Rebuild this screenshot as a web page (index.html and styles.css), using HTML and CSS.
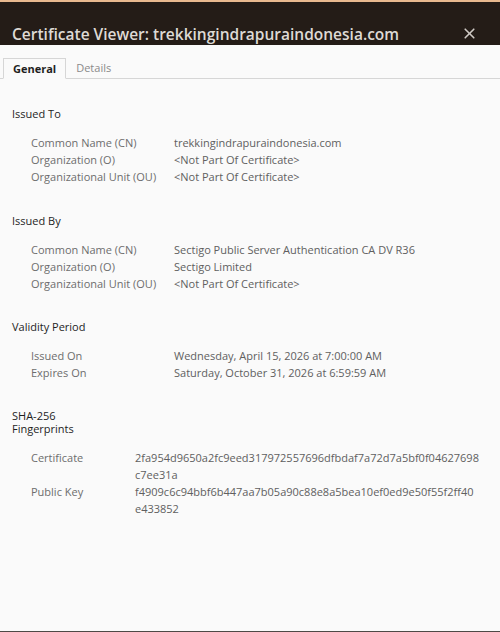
FILE: index.html
```html
<!DOCTYPE html>
<html>
<head>
<meta charset="utf-8">
<link rel="stylesheet" href="styles.css">
</head>
<body>
<div class="window">
  <div class="accent"></div>
  <header class="titlebar">
    <h1 class="title">Certificate Viewer: trekkingindrapuraindonesia.com</h1>
    <button class="close" aria-label="Close">
      <svg width="11" height="11" viewBox="0 0 11 11"><path d="M1.2 1.2 L9.8 9.8 M9.8 1.2 L1.2 9.8" stroke="#cfcac5" stroke-width="1.6" stroke-linecap="round"/></svg>
    </button>
  </header>
  <main class="content">
    <nav class="tabs">
      <span class="tab active">General</span>
      <span class="tab">Details</span>
    </nav>

    <section class="section issued-to">
      <h2 class="heading">Issued To</h2>
      <div class="rows">
        <span class="label">Common Name (CN)</span><span class="value">trekkingindrapuraindonesia.com</span>
        <span class="label">Organization (O)</span><span class="value">&lt;Not Part Of Certificate&gt;</span>
        <span class="label">Organizational Unit (OU)</span><span class="value">&lt;Not Part Of Certificate&gt;</span>
      </div>
    </section>

    <section class="section issued-by">
      <h2 class="heading">Issued By</h2>
      <div class="rows">
        <span class="label">Common Name (CN)</span><span class="value">Sectigo Public Server Authentication CA DV R36</span>
        <span class="label">Organization (O)</span><span class="value">Sectigo Limited</span>
        <span class="label">Organizational Unit (OU)</span><span class="value">&lt;Not Part Of Certificate&gt;</span>
      </div>
    </section>

    <section class="section validity">
      <h2 class="heading">Validity Period</h2>
      <div class="rows">
        <span class="label">Issued On</span><span class="value">Wednesday, April 15, 2026 at 7:00:00 AM</span>
        <span class="label">Expires On</span><span class="value">Saturday, October 31, 2026 at 6:59:59 AM</span>
      </div>
    </section>

    <section class="section fingerprints">
      <h2 class="heading narrow">SHA-256 Fingerprints</h2>
      <div class="rows fp">
        <span class="label">Certificate</span><span class="value hash">2fa954d9650a2fc9eed317972557696dfbdaf7a72d7a5bf0f04627698<wbr>c7ee31a</span>
        <span class="label">Public Key</span><span class="value hash">f4909c6c94bbf6b447aa7b05a90c88e8a5bea10ef0ed9e50f55f2ff40<wbr>e433852</span>
      </div>
    </section>
  </main>
</div>
</body>
</html>
```

FILE: styles.css
```css
* { box-sizing: border-box; margin: 0; padding: 0; }
html, body { width: 500px; height: 632px; overflow: hidden; }
body {
  font-family: "Open Sans", "Noto Sans", sans-serif;
  background: #fafafa;
}
.window {
  display: flex;
  flex-direction: column;
  height: 632px;
  border-bottom: 1px solid #4e4946;
}
.accent { height: 2px; background: #e9b98f; }
.titlebar {
  height: 43px;
  background: #241c17;
  display: flex;
  align-items: flex-end;
  justify-content: space-between;
  padding: 0 25px 0 12px;
}
.title {
  font-size: 15.5px;
  font-weight: 600;
  color: #dedad5;
  line-height: 22px;
}
.close {
  background: none;
  border: none;
  display: flex;
  margin-bottom: 6px;
}
.content {
  flex: 1;
  background: #fafafa;
  padding-top: 13px;
}
.tabs {
  display: flex;
  align-items: flex-end;
  padding-left: 3px;
  border-bottom: 1px solid #d6d6d6;
  height: 21px;
}
.tab {
  font-size: 11px;
  color: #8a8a8a;
  padding: 0 10px;
  line-height: 20px;
}
.tab.active {
  color: #1f1f1f;
  font-weight: 700;
  border: 1px solid #d6d6d6;
  border-bottom: 1px solid #fafafa;
  margin-bottom: -1px;
  height: 21px;
  padding: 0 9px;
}
.section { padding: 27.5px 12px 0; }
.section.issued-to { padding-top: 28px; }
.section.issued-by { padding-top: 29px; }
.section.validity { padding-top: 27.5px; }
.section.fingerprints { padding-top: 28.5px; }
.heading {
  font-size: 11px;
  font-weight: 400;
  color: #1e1e1e;
  line-height: 13px;
}
.heading.narrow { width: 70px; }
.rows {
  display: grid;
  grid-template-columns: 143px 1fr;
  padding-left: 19px;
  margin-top: 14px;
  font-size: 11px;
  line-height: 17px;
  color: #6d6d6d;
}
.value { color: #606060; }
.rows.fp { grid-template-columns: 104px 1fr; }
.hash { overflow-wrap: normal; }
```
